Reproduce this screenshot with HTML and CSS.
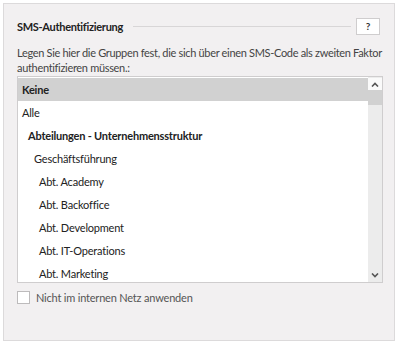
FILE: index.html
```html
<!DOCTYPE html>
<html lang="de">
<head>
  <meta charset="UTF-8" />
  <title>SMS-Authentifizierung</title>
  <link rel="stylesheet" href="styles.css">
</head>
<body>

  <div class="panel">
    <div class="kopf">
      <h2>SMS-Authentifizierung</h2>
      <span class="linie"></span>
      <button class="hilfe">?</button>
    </div>

    <p class="beschreibung">Legen Sie hier die Gruppen fest, die sich über einen SMS-Code als zweiten Faktor authentifizieren müssen.:</p>

    <div class="liste">
      <div class="eintraege">
        <div class="eintrag aktiv">Keine</div>
        <div class="eintrag">Alle</div>
        <div class="eintrag gruppe">Abteilungen - Unternehmensstruktur</div>
        <div class="eintrag stufe2">Geschäftsführung</div>
        <div class="eintrag stufe3">Abt. Academy</div>
        <div class="eintrag stufe3">Abt. Backoffice</div>
        <div class="eintrag stufe3">Abt. Development</div>
        <div class="eintrag stufe3">Abt. IT-Operations</div>
        <div class="eintrag stufe3">Abt. Marketing</div>
      </div>
      <div class="scrollbar">
        <div class="pfeil oben">
          <svg width="8" height="5" viewBox="0 0 8 5"><path d="M1 4.5 L4 1.5 L7 4.5" fill="none" stroke="#555" stroke-width="1.6"/></svg>
        </div>
        <div class="daumen"></div>
        <div class="spur"></div>
        <div class="pfeil unten">
          <svg width="8" height="5" viewBox="0 0 8 5"><path d="M1 0.5 L4 3.5 L7 0.5" fill="none" stroke="#555" stroke-width="1.6"/></svg>
        </div>
      </div>
    </div>

    <label class="option">
      <span class="kasten"></span>
      Nicht im internen Netz anwenden
    </label>
  </div>

</body>
</html>
```

FILE: styles.css
```css
* {
  box-sizing: border-box;
  margin: 0;
  padding: 0;
}

body {
  font-family: Lato, Arial, sans-serif;
  font-size: 11px;
  letter-spacing: -0.2px;
  color: #3c3c3c;
  background-color: #fff;
  padding: 3px;
}

/* RAHMEN */
.panel {
  width: 392px;
  height: 338px;
  background-color: #f2f0f1;
  border: 1px solid #dcdadb;
  padding: 13px 12px 0 13px;
}

.kopf {
  display: flex;
  align-items: center;
  height: 18px;
}

.kopf h2 {
  font-size: 11px;
  font-weight: bold;
  letter-spacing: -0.3px;
  color: #222;
}

.linie {
  flex: 1;
  border-top: 1px solid #d8d6d7;
  margin: 1px 5px 0 10px;
}

.hilfe {
  width: 24px;
  height: 17px;
  background-color: #fff;
  border: 1px solid #cfcdce;
  font-family: inherit;
  font-size: 10px;
  font-weight: bold;
  color: #333;
  margin-right: 2px;
}

.beschreibung {
  margin-top: 10px;
  margin-right: -9px;
  line-height: 15px;
  letter-spacing: -0.32px;
  color: #444;
}

/* LISTE */
.liste {
  display: flex;
  margin-top: 1px;
  width: 366px;
  height: 207px;
  border: 1px solid #cfcdce;
  background-color: #fff;
}

.eintraege {
  flex: 1;
  overflow: hidden;
  padding-top: 1px;
}

.eintrag {
  height: 23px;
  line-height: 23px;
  padding-left: 4px;
  color: #222;
  white-space: nowrap;
}

.eintrag.aktiv {
  background-color: #d1d1d1;
  font-weight: bold;
}

.eintrag.gruppe {
  font-weight: bold;
  padding-left: 10px;
}

.eintrag.stufe2 {
  padding-left: 16px;
}

.eintrag.stufe3 {
  padding-left: 21px;
}

.scrollbar {
  width: 14px;
  display: flex;
  flex-direction: column;
  background-color: #ececec;
  padding-top: 1px;
}

.pfeil {
  height: 12px;
  display: flex;
  align-items: center;
  justify-content: center;
}

.pfeil.oben {
  background-color: #fafafa;
}

.pfeil.unten {
  height: 14px;
}

.daumen {
  height: 15px;
  background-color: #d1d1d1;
}

.spur {
  flex: 1;
}

/* OPTION */
.option {
  display: flex;
  align-items: center;
  margin-top: 8px;
  color: #555;
}

.kasten {
  width: 13px;
  height: 13px;
  background-color: #fff;
  border: 1px solid #bdbbbc;
  margin-right: 6px;
}
```
